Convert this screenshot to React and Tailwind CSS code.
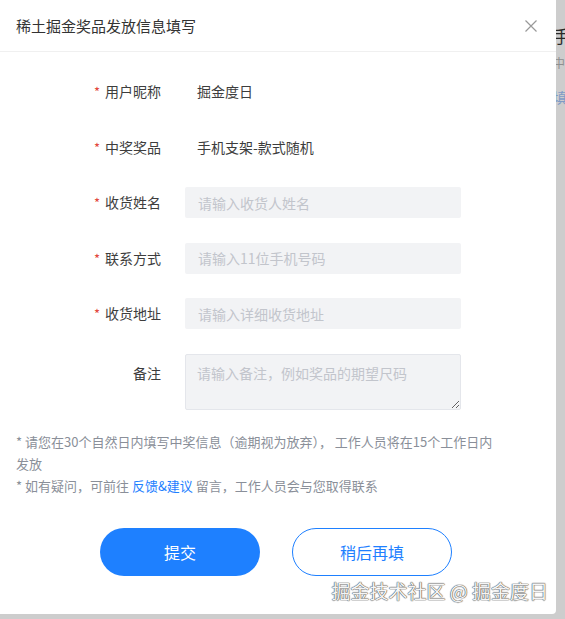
import { useState } from "react";

const font = "font-['Microsoft_YaHei','Noto_Sans_CJK_SC','Noto_Sans',sans-serif]";

const Field = ({ label, required, children, top }) => (
  <div className={`flex ${top ? "items-start" : "items-center h-[31px]"}`}>
    <div
      className={`w-[161px] flex justify-end items-center text-[14px] text-[#3d3d3d] ${
        top ? "pt-[8px] leading-[22px]" : "leading-[31px]"
      }`}
    >
      {required && <span className="text-[#e2463b] mr-[5px] text-[13px]">*</span>}
      <span>{label}</span>
    </div>
    <div className="ml-6">{children}</div>
  </div>
);

const inputCls =
  "w-[276px] h-[31px] bg-[#f2f3f5] rounded-[2px] px-[13px] text-[14px] text-[#333] placeholder-[#c2c5cc] outline-none";

export default function App() {
  const [name, setName] = useState("");
  const [phone, setPhone] = useState("");
  const [addr, setAddr] = useState("");
  const [note, setNote] = useState("");

  return (
    <div className={`relative w-[565px] h-[619px] bg-[#cdcdcd] overflow-hidden flex items-start ${font}`}>
      {/* dialog */}
      <div className="w-[556px] h-[614px] bg-white rounded-br-[4px] flex flex-col shrink-0">
        <div className="h-[52px] border-b border-[#f0f0f0] pl-4 pr-[19px] flex items-center justify-between">
          <h2 className="text-[15px] text-[#333] leading-none">稀土掘金奖品发放信息填写</h2>
          <button className="text-[#999]">
            <svg width="12" height="12" viewBox="0 0 12 12" stroke="currentColor" strokeWidth="1.2" fill="none">
              <path d="M0.5 0.5 L11.5 11.5 M11.5 0.5 L0.5 11.5" />
            </svg>
          </button>
        </div>

        <div className="pt-6 flex flex-col gap-[24.5px]">
          <Field label="用户昵称" required>
            <div className="px-3 text-[14px] text-[#3d3d3d]">掘金度日</div>
          </Field>
          <Field label="中奖奖品" required>
            <div className="px-3 text-[14px] text-[#3d3d3d]">手机支架-款式随机</div>
          </Field>
          <Field label="收货姓名" required>
            <input className={inputCls} placeholder="请输入收货人姓名" value={name} onChange={(e) => setName(e.target.value)} />
          </Field>
          <Field label="联系方式" required>
            <input className={inputCls} placeholder="请输入11位手机号码" value={phone} onChange={(e) => setPhone(e.target.value)} />
          </Field>
          <Field label="收货地址" required>
            <input className={inputCls} placeholder="请输入详细收货地址" value={addr} onChange={(e) => setAddr(e.target.value)} />
          </Field>
          <Field label="备注" top>
            <textarea
              className="block w-[276px] h-[56px] bg-[#f2f3f5] border border-[#e4e6eb] rounded-[2px] px-[11px] py-[7px] text-[14px] leading-[22px] text-[#333] placeholder-[#c2c5cc] outline-none"
              placeholder="请输入备注，例如奖品的期望尺码"
              value={note}
              onChange={(e) => setNote(e.target.value)}
            />
          </Field>
        </div>

        <div className="mt-[21px] px-4 text-[13px] leading-[22px] text-[#8a8f99]">
          <p>
            * 请您在30个自然日内填写中奖信息（逾期视为放弃）， 工作人员将在15个工作日内
            <br />
            发放
          </p>
          <p>
            * 如有疑问，可前往 <a className="text-[#1e80ff]">反馈&amp;建议</a> 留言，工作人员会与您取得联系
          </p>
        </div>

        <div className="mt-[31px] flex justify-center gap-8 pr-[4px]">
          <button className="w-[160px] h-[48px] rounded-full bg-[#1e80ff] text-white text-[16px]">提交</button>
          <button className="w-[160px] h-[48px] rounded-full border border-[#1e80ff] text-[#1e80ff] text-[16px] bg-white">
            稍后再填
          </button>
        </div>
      </div>

      {/* page behind the overlay */}
      <div className="relative flex-1 h-full overflow-hidden">
        <div className="absolute left-[-3px] top-[27px] text-[17px] leading-none text-[#2a2a2a]">手</div>
        <div className="absolute left-[-3px] top-[57px] text-[12px] leading-none text-[#8f8f8f]">中</div>
        <div className="absolute left-[-3px] top-[90px] text-[14px] leading-none text-[#7f9bc6]">填</div>
      </div>

      {/* watermark */}
      <div className="absolute right-[17px] top-[579px] text-[19px] leading-[24px] text-[#f5f5f5] [text-shadow:0_0_1px_#555,0_0_1px_#555,0_0_1px_#555]">
        掘金技术社区 @ 掘金度日
      </div>
    </div>
  );
}
